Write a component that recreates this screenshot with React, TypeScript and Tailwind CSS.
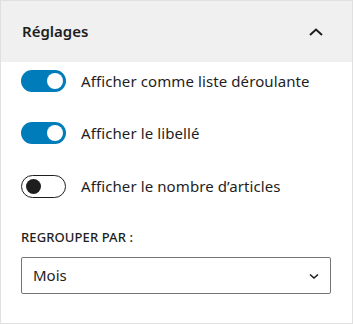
import React from "react";

function Toggle({ on }: { on: boolean }) {
  if (on) {
    return (
      <div className="relative h-[22px] w-[45px] shrink-0 rounded-full bg-[#007cba]">
        <div className="absolute right-[3px] top-[3px] h-[16px] w-[16px] rounded-full bg-white" />
      </div>
    );
  }
  return (
    <div className="relative h-[23px] w-[45px] shrink-0 rounded-full border border-[#1e1e1e] bg-white">
      <div className="absolute left-[4px] top-[3px] h-[15px] w-[15px] rounded-full bg-[#1e1e1e]" />
    </div>
  );
}

function Row({ on, label }: { on: boolean; label: string }) {
  return (
    <div className="flex h-[22px] items-center gap-[15px]">
      <Toggle on={on} />
      <span className="text-[15px] tracking-[0.1px] text-[#1e1e1e]">{label}</span>
    </div>
  );
}

export default function App() {
  return (
    <div
      className="box-border flex h-[324px] w-[353px] flex-col border border-[#e0e0e0] bg-white"
      style={{ fontFamily: '"Noto Sans", "Open Sans", sans-serif' }}
    >
      <div className="flex h-[61px] shrink-0 items-center justify-between bg-[#f0f0f0] pl-[21px] pr-[28px]">
        <span className="text-[15px] font-semibold text-[#1e1e1e]">Réglages</span>
        <svg width="16" height="10" viewBox="0 0 16 10" fill="none">
          <path d="M2 8 L8 2.5 L14 8" stroke="#1e1e1e" strokeWidth="2" />
        </svg>
      </div>
      <div className="flex flex-col px-[20px] pt-[8px]">
        <div className="flex flex-col gap-[30px]">
          <Row on={true} label="Afficher comme liste déroulante" />
          <Row on={true} label="Afficher le libellé" />
          <div className="mt-[1px]">
            <Row on={false} label="Afficher le nombre d’articles" />
          </div>
        </div>
        <div className="mt-[32px] text-[13px] font-medium uppercase leading-[16px] tracking-[0.1px] text-[#1e1e1e]">
          Regrouper par :
        </div>
        <div className="mt-[12px] flex h-[37px] w-[310px] items-center justify-between rounded-[2px] border border-[#757575] pl-[11px] pr-[9px]">
          <span className="text-[15px] text-[#1e1e1e]">Mois</span>
          <svg width="14" height="10" viewBox="0 0 14 10" fill="none">
            <path d="M3 3.5 L7 7 L11 3.5" stroke="#1e1e1e" strokeWidth="1.6" />
          </svg>
        </div>
      </div>
    </div>
  );
}
